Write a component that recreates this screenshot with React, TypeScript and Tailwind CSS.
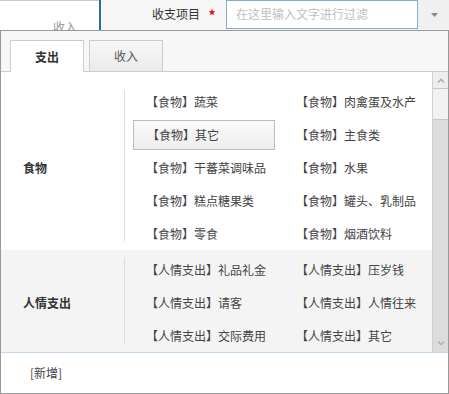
const FOOD = [
  "蔬菜",
  "肉禽蛋及水产",
  "其它",
  "主食类",
  "干蕃菜调味品",
  "水果",
  "糕点糖果类",
  "罐头、乳制品",
  "零食",
  "烟酒饮料",
];

const GIFT = ["礼品礼金", "压岁钱", "请客", "人情往来", "交际费用", "其它"];

interface Group {
  name: string;
  tag: string;
  items: string[];
  shaded?: boolean;
}

const GROUPS: Group[] = [
  { name: "食物", tag: "食物", items: FOOD },
  { name: "人情支出", tag: "人情支出", items: GIFT, shaded: true },
];

function Section({ group, selected }: { group: Group; selected: string }) {
  return (
    <div className={`flex pt-[3px] ${group.shaded ? "bg-[#f4f4f4]" : "bg-white"}`}>
      <div className="w-[123px] shrink-0 flex items-center pl-[22px] font-bold text-[#333]">
        {group.name}
      </div>
      <div className="w-px shrink-0 bg-[#dddddd] mt-[5px] mb-[9px]" />
      <div className="grid grid-cols-[142px_142px] gap-x-[8px] pl-[8px]">
        {group.items.map((item) => {
          const key = `${group.tag}-${item}`;
          return (
            <div key={key} className="h-[33px] flex items-center">
              <div
                className={`h-[30px] w-full flex items-center pl-[13px] whitespace-nowrap text-[#444] ${
                  key === selected
                    ? "border border-[#bbbbbb] bg-gradient-to-b from-[#fafafa] to-[#eeeeee] pl-[12px]"
                    : ""
                }`}
              >
                【{group.tag}】{item}
              </div>
            </div>
          );
        })}
      </div>
    </div>
  );
}

export default function App() {
  return (
    <div
      className="w-[449px] h-[394px] bg-white text-[12px] leading-none overflow-hidden"
      style={{ fontFamily: '"Noto Sans CJK SC", "Noto Sans", sans-serif' }}
    >
      {/* field row behind the popup */}
      <div className="flex h-[30px]">
        <div className="w-[99px] h-[30px] border-t border-[#cccccc] bg-white relative overflow-hidden">
          <span className="absolute left-[53px] top-[20px] text-[#999]">收入</span>
        </div>
        <div className="w-[2px] bg-[#3468a0]" />
        <div className="flex-1 flex bg-[#f6f6f6]">
          <div className="w-[99px] flex items-center justify-end pb-[2px] text-[#333]">收支项目</div>
          <div className="w-[26px] flex items-center justify-center pr-[2px] pb-[1px] text-[#ff0000] font-bold text-[14px]">
            *
          </div>
          <div className="w-[192px] h-[29px] border border-[#86a9cc] bg-white flex items-center pl-[9px] pb-[1px] text-[#c0c0c0]">
            在这里输入文字进行过滤
          </div>
          <div className="flex-1 h-[29px] bg-[#f0f0f0] flex items-center justify-center pl-[2px]">
            <svg width="7" height="4" viewBox="0 0 7 4">
              <path d="M0 0h7L3.5 4z" fill="#888" />
            </svg>
          </div>
        </div>
      </div>

      {/* popup */}
      <div className="h-[364px] border border-[#999999] flex flex-col">
        <div className="h-[41px] bg-[#f7f7f7] border-b border-[#cccccc] flex items-end pl-[9px] gap-[5px]">
          <div className="w-[74px] h-[32px] -mb-px bg-white border border-b-0 border-[#cccccc] flex items-center justify-center font-bold text-[#333]">
            支出
          </div>
          <div className="w-[74px] h-[31px] bg-gradient-to-b from-[#f7f7f7] to-[#ebebeb] border border-b-0 border-[#cccccc] flex items-center justify-center text-[#555]">
            收入
          </div>
        </div>

        <div className="h-[280px] flex">
          <div className="flex-1 pt-[10px] bg-white overflow-hidden">
            {GROUPS.map((g) => (
              <Section key={g.name} group={g} selected="食物-其它" />
            ))}
          </div>
          {/* scrollbar */}
          <div className="w-[16px] flex flex-col bg-[#dcdcdc] border-l border-[#d0d0d0]">
            <div className="h-[16px] bg-[#eeeeee] flex items-center justify-center">
              <svg width="8" height="5" viewBox="0 0 8 5">
                <path d="M1 4.5L4 1.5L7 4.5" stroke="#b0b0b0" strokeWidth="1.6" fill="none" />
              </svg>
            </div>
            <div className="h-[32px] bg-[#f2f2f2] border-y border-[#c8c8c8]" />
            <div className="flex-1" />
            <div className="h-[17px] flex items-center justify-center">
              <svg width="8" height="5" viewBox="0 0 8 5">
                <path d="M1 0.5L4 3.5L7 0.5" stroke="#b0b0b0" strokeWidth="1.6" fill="none" />
              </svg>
            </div>
          </div>
        </div>

        <div className="flex-1 border-t border-[#c6d8ee] bg-white flex items-center pl-[29px] pb-[1px] text-[#444]">
          [新增]
        </div>
      </div>
    </div>
  );
}
